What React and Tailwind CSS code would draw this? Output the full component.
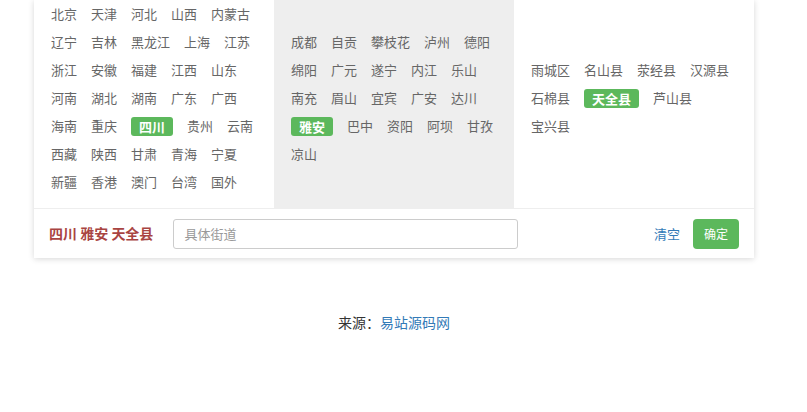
import React, { useState } from "react";

const provinces = [
  "北京", "天津", "河北", "山西", "内蒙古", "辽宁", "吉林", "黑龙江", "上海", "江苏",
  "浙江", "安徽", "福建", "江西", "山东", "河南", "湖北", "湖南", "广东", "广西",
  "海南", "重庆", "四川", "贵州", "云南", "西藏", "陕西", "甘肃", "青海", "宁夏",
  "新疆", "香港", "澳门", "台湾", "国外",
];

const cities = [
  "成都", "自贡", "攀枝花", "泸州", "德阳", "绵阳", "广元", "遂宁", "内江", "乐山",
  "南充", "眉山", "宜宾", "广安", "达川", "雅安", "巴中", "资阳", "阿坝", "甘孜", "凉山",
];

const counties = ["雨城区", "名山县", "荥经县", "汉源县", "石棉县", "天全县", "芦山县", "宝兴县"];

const font = { fontFamily: '"Noto Sans CJK SC", "Microsoft YaHei", sans-serif' };

const Column = ({ items, selected, onPick, className }) => (
  <div className={`w-[240px] px-[17px] pb-[12px] flex flex-wrap content-start gap-x-[14px] ${className}`}>
    {items.map((name) => (
      <div key={name} className="h-[28px] flex items-center cursor-pointer" onClick={() => onPick(name)}>
        {name === selected ? (
          <span className="h-[19px] px-2 flex items-center rounded-[3px] bg-[#5cb85c] text-white font-bold text-[13px] leading-none">{name}</span>
        ) : (
          <span className="text-[13px] leading-none text-[#666] -translate-y-px">{name}</span>
        )}
      </div>
    ))}
  </div>
);

export default function App() {
  const [prov, setProv] = useState("四川");
  const [city, setCity] = useState("雅安");
  const [county, setCounty] = useState("天全县");
  const [street, setStreet] = useState("");

  return (
    <div className="min-h-[412px] bg-white" style={font}>
      <div className="ml-[34px] w-[720px] bg-white shadow-[0_1px_6px_rgba(0,0,0,0.16)]">
        <div className="flex h-[208px]">
          <Column items={provinces} selected={prov} onPick={setProv} className="bg-white" />
          <Column items={cities} selected={city} onPick={setCity} className="bg-[#eee] pt-[28px]" />
          <Column items={counties} selected={county} onPick={setCounty} className="bg-white pt-[56px]" />
        </div>
        <div className="h-[50px] border-t border-[#eee] flex items-center pl-[15px] pr-[15px]">
          <span className="text-[14px] font-bold text-[#a94442] whitespace-nowrap">
            {prov} {city} {county}
          </span>
          <input
            value={street}
            onChange={(e) => setStreet(e.target.value)}
            placeholder="具体街道"
            className="ml-[20px] w-[345px] h-[30px] border border-[#ccc] rounded-[3px] px-[10px] text-[13px] text-[#555] placeholder:text-[#999] outline-none"
            style={font}
          />
          <a className="ml-auto mr-[13px] text-[13px] text-[#337ab7] cursor-pointer" onClick={() => setStreet("")}>清空</a>
          <button className="w-[46px] h-[30px] rounded-[4px] bg-[#5cb85c] text-white text-[12px] flex items-center justify-center">确定</button>
        </div>
      </div>
      <div className="ml-[34px] w-[720px] mt-[54px] text-center text-[14px] leading-[20px] text-[#333]">
        来源：<a className="text-[#337ab7]">易站源码网</a>
      </div>
    </div>
  );
}
